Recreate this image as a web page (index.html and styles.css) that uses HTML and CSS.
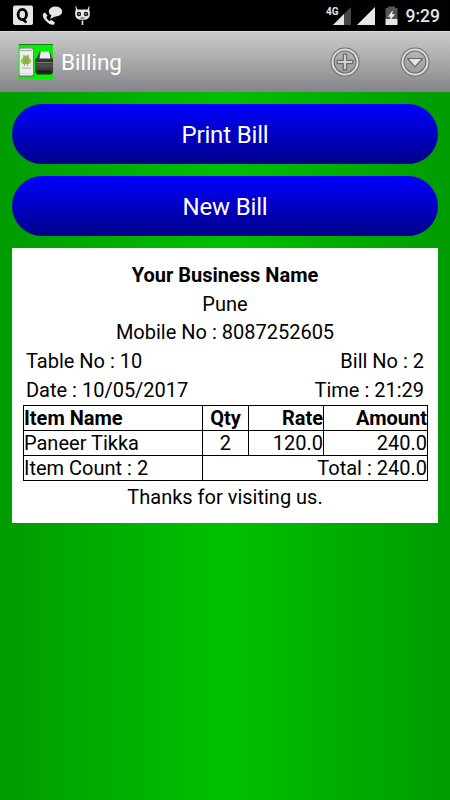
FILE: index.html
```html
<!DOCTYPE html>
<html lang="en">

<head>
    <meta charset="UTF-8">
    <meta name="viewport" content="width=device-width, initial-scale=1.0">
    <title>Billing</title>
    <link rel="stylesheet" href="styles.css">
</head>

<body>
    <div class="status-bar">
        <svg class="status-left" width="94" height="31" viewBox="0 0 94 31">
            <rect x="13" y="5.500" width="20" height="19.500" rx="2" fill="#e6e6e6" />
            <ellipse cx="22.300" cy="14.500" rx="4.200" ry="5.200" fill="none" stroke="#000" stroke-width="2.800" />
            <path d="M22 19l4.500 3.500" stroke="#000" stroke-width="2.400" />
            <ellipse cx="55.500" cy="11.500" rx="6.700" ry="5" fill="#e6e6e6" />
            <path d="M52 14l-2 5 6-3z" fill="#e6e6e6" />
            <path d="M45 12.500c-3 1-3 4 0 7.500s6.500 5.500 9 4.500l1-2-3.500-2.500-2 1c-1.500-.8-2.500-2-3.200-3.800l1.200-1.700z" fill="#e6e6e6" />
            <path d="M76 6l1.500 3.500h10L89 6l.5.300-.3 3.700c.9 1.500.9 5 .1 7-1 2-3.300 2.800-6.800 2.800s-5.800-.8-6.800-2.800c-.8-2-.8-5.500.1-7l-.3-3.700z" fill="#e6e6e6" />
            <circle cx="79" cy="14" r="2.200" fill="#111" />
            <circle cx="86" cy="14" r="2.200" fill="#111" />
            <circle cx="79" cy="14" r=".8" fill="#e6e6e6" />
            <circle cx="86" cy="14" r=".8" fill="#e6e6e6" />
            <path d="M80.500 18h4" stroke="#444" />
            <path d="M82.500 20.500v4.500" stroke="#e6e6e6" stroke-width="1.600" />
        </svg>
        <div class="status-right">
            <span class="network">4G</span>
            <svg width="75" height="31" viewBox="0 0 75 31">
                <path d="M20 7v18H2z" fill="#454545" />
                <path d="M13 14v11H2z" fill="#e6e6e6" />
                <path d="M44 7v18H26z" fill="#e6e6e6" />
                <path d="M57 6.500h7v2h-7zM54.500 8h12v11h-12z" fill="#555" />
                <path d="M54.500 19h12v6h-12z" fill="#e6e6e6" />
                <path d="M61.800 10l-4.800 6.800h2.700L58.500 21l5.500-6.800h-2.800z" fill="#f2f2f2" />
            </svg>
            <span class="clock">9:29</span>
        </div>
    </div>

    <div class="header">
        <svg class="logo" width="36" height="38" viewBox="0 0 36 38">
            <defs>
                <linearGradient id="printer" x1="0" y1="0" x2="0" y2="1">
                    <stop offset="0" stop-color="#666" />
                    <stop offset=".4" stop-color="#303030" />
                    <stop offset=".6" stop-color="#505050" />
                    <stop offset="1" stop-color="#222" />
                </linearGradient>
            </defs>
            <rect x=".5" y="1" width="34.500" height="35" rx="1" fill="#00f000" />
            <path d="M1 1.500h34" stroke="#267326" />
            <rect x="1" y="5" width="15" height="29" rx="1.500" fill="#777" />
            <rect x="1.500" y="5.500" width="13.500" height="27" rx="1.500" fill="#eee" />
            <path d="M2 7.500h12" stroke="#aaa" />
            <path d="M4.500 16a3.500 3.500 0 0 1 7 0zM4.500 16h7v5h-7z" fill="#8ab648" />
            <path d="M3.800 16v4M12.200 16v4M6.500 20v3M9.500 20v3M5.500 12l1 1.500M10.500 12l-1 1.500" stroke="#8ab648" stroke-width="1.200" />
            <path d="M4 25h9" stroke="#999" stroke-width=".8" />
            <path d="M2 30.500h12" stroke="#ddd" />
            <path d="M19.500 13.500l1.500-5h11l1.500 5 1.500 3v13l-2 2H19l-2-2v-13z" fill="url(#printer)" />
            <path d="M21.500 15.500l1.500-7.500h8l1.500 7.500z" fill="#eee" />
            <path d="M22.500 8.500h9" stroke="#aaa" />
            <path d="M17.500 19.500H34" stroke="#777" />
            <path d="M19.500 28.500h13" stroke="#181818" stroke-width="2" />
        </svg>
        <span class="title">Billing</span>
        <svg class="action" width="30" height="30" viewBox="0 0 30 30">
            <circle cx="15" cy="15" r="12.500" fill="none" stroke="#707073" stroke-width="4.200" />
            <circle cx="15" cy="15" r="12.500" fill="none" stroke="#dcdcdc" stroke-width="2" />
            <path d="M13.300 7.200h3.400v6.100h6.100v3.400h-6.100v6.100h-3.400v-6.100H7.200v-3.400h6.100z" fill="#d0d0d0" stroke="#68686a" stroke-width="1.200" stroke-linejoin="round" />
        </svg>
        <svg class="action" width="30" height="30" viewBox="0 0 30 30">
            <circle cx="15" cy="15" r="12.500" fill="none" stroke="#707073" stroke-width="4.200" />
            <circle cx="15" cy="15" r="12.500" fill="none" stroke="#dcdcdc" stroke-width="2" />
            <path d="M7.500 11.500h15L15 19.800z" fill="#e4e4e4" stroke="#68686a" stroke-width="1.200" stroke-linejoin="round" />
        </svg>
    </div>

    <div class="container">
        <button class="btn">Print Bill</button>
        <button class="btn">New Bill</button>

        <div class="bill">
            <div class="line business">Your Business Name</div>
            <div class="line">Pune</div>
            <div class="line">Mobile No : 8087252605</div>
            <div class="line split">
                <span>Table No : 10</span>
                <span>Bill No : 2</span>
            </div>
            <div class="line split">
                <span>Date : 10/05/2017</span>
                <span>Time : 21:29</span>
            </div>
            <table class="items">
                <colgroup>
                    <col class="col-name">
                    <col class="col-qty">
                    <col class="col-rate">
                    <col class="col-amount">
                </colgroup>
                <tr>
                    <th class="left">Item Name</th>
                    <th class="center">Qty</th>
                    <th>Rate</th>
                    <th>Amount</th>
                </tr>
                <tr>
                    <td class="left">Paneer Tikka</td>
                    <td class="center">2</td>
                    <td>120.0</td>
                    <td>240.0</td>
                </tr>
                <tr>
                    <td class="left">Item Count : 2</td>
                    <td colspan="3">Total : 240.0</td>
                </tr>
            </table>
            <div class="line thanks">Thanks for visiting us.</div>
        </div>
    </div>
</body>

</html>
```

FILE: styles.css
```css
* {
    margin: 0;
    padding: 0;
    box-sizing: border-box;
}

body {
    min-height: 100vh;
    font-family: Roboto, sans-serif;
    background: linear-gradient(to right, #009c00, #00c000 50%, #009c00);
}

.status-bar {
    height: 31px;
    display: flex;
    justify-content: space-between;
    background-color: #000;
    color: #e6e6e6;
}

.status-right {
    display: flex;
    padding-right: 10px;
}

.network {
    margin-top: 6px;
    margin-right: -8px;
    z-index: 1;
    font-size: 10px;
    font-weight: bold;
    line-height: 12px;
}

.clock {
    font-size: 17.5px;
    font-weight: 500;
    line-height: 33px;
}

.header {
    height: 61px;
    display: flex;
    align-items: center;
    padding: 0 20px 0 18px;
    border-top: 1px solid #dadadc;
    background: linear-gradient(#cbcbcd, #858589);
}

.title {
    flex: 1;
    margin-left: 7px;
    font-size: 22.5px;
    color: #fff;
}

.action {
    margin-left: 40px;
}

.container {
    padding: 12px 12.4px;
}

.btn {
    display: block;
    width: 100%;
    height: 59.6px;
    margin-bottom: 12.6px;
    padding-top: 3px;
    border: none;
    border-radius: 30px;
    font-family: inherit;
    font-size: 24px;
    letter-spacing: -0.15px;
    color: #fff;
    background: linear-gradient(#0000ff, #000088);
}

.bill {
    height: 274.4px;
    padding: 12.6px 10.6px 0;
    font-size: 20px;
    text-align: center;
    color: #000;
    background-color: #fff;
}

.line {
    height: 28.75px;
    line-height: 28.75px;
}

.business {
    font-weight: bold;
}

.split {
    display: flex;
    justify-content: space-between;
    padding: 0 3px;
}

.items {
    width: 405px;
    border-collapse: collapse;
    table-layout: fixed;
}

.items th,
.items td {
    height: 25px;
    border: 1px solid #000;
    line-height: 24px;
    text-align: right;
}

.items .left {
    text-align: left;
}

.items .center {
    text-align: center;
}

.col-name {
    width: 179px;
}

.col-qty {
    width: 46px;
}

.col-rate {
    width: 75px;
}

.col-amount {
    width: 104px;
}

.thanks {
    margin-top: 2px;
}
```
